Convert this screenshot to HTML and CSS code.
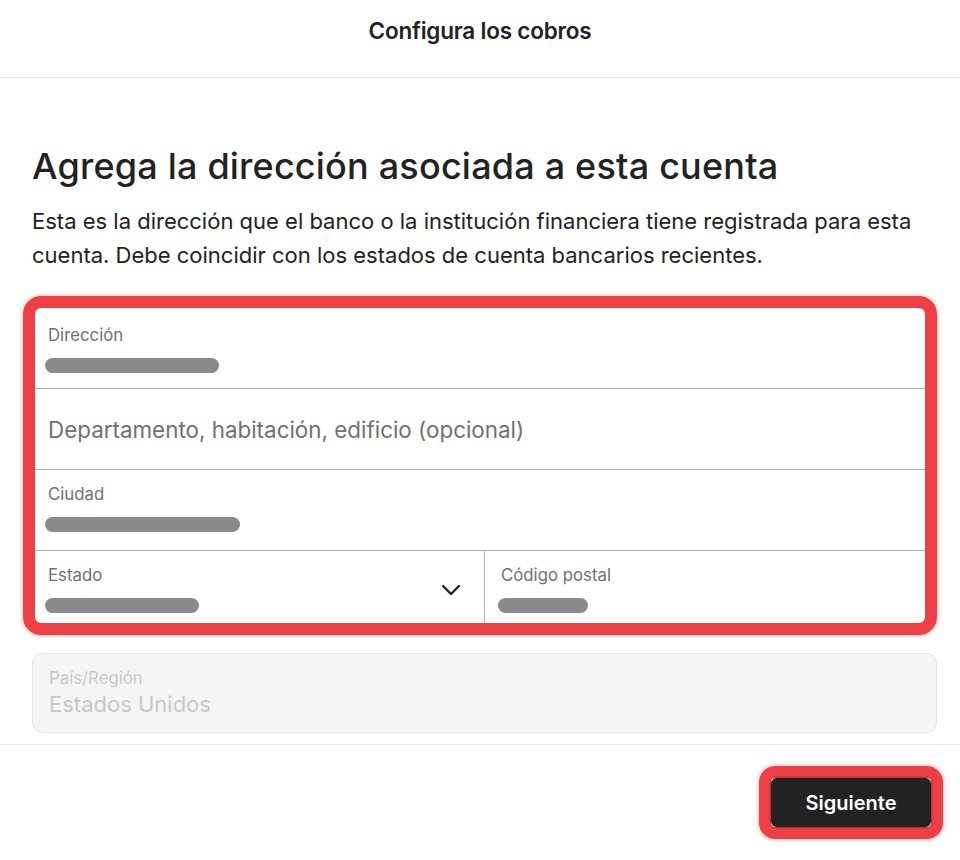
FILE: index.html
```html
<!DOCTYPE html>
<html lang="es">
<head>
	<meta charset="UTF-8">
	<title>Configura los cobros</title>
	<link rel="stylesheet" href="styles.css">
</head>
<body>
	<div class="header">Configura los cobros</div>
	<div class="main">
		<h1 class="title">Agrega la dirección asociada a esta cuenta</h1>
		<p class="intro">Esta es la dirección que el banco o la institución financiera tiene registrada para esta cuenta. Debe coincidir con los estados de cuenta bancarios recientes.</p>
		<div class="highlight">
			<div class="row">
				<div class="field">
					<span class="label">Dirección</span>
					<span class="blur" style="width: 174px;"></span>
				</div>
			</div>
			<div class="row">
				<div class="field empty">
					<span class="placeholder">Departamento, habitación, edificio (opcional)</span>
				</div>
			</div>
			<div class="row">
				<div class="field">
					<span class="label">Ciudad</span>
					<span class="blur" style="width: 195px;"></span>
				</div>
			</div>
			<div class="row split">
				<div class="field select">
					<span class="label">Estado</span>
					<span class="blur" style="width: 154px;"></span>
					<svg class="chevron" width="20" height="12" viewBox="0 0 20 12"><path d="M2 2l8 8 8-8" fill="none" stroke="#222" stroke-width="2.4" stroke-linecap="round" stroke-linejoin="round"/></svg>
				</div>
				<div class="field">
					<span class="label">Código postal</span>
					<span class="blur" style="width: 90px;"></span>
				</div>
			</div>
		</div>
		<div class="country">
			<span class="label">País/Región</span>
			<span class="value">Estados Unidos</span>
		</div>
	</div>
	<div class="footer">
		<div class="btn-mark">
			<button class="btn">Siguiente</button>
		</div>
	</div>
</body>
</html>
```
FILE: styles.css
```css
*{
	margin: 0;
	padding: 0;
	box-sizing: border-box;
}
body{
	width: 960px;
	height: 860px;
	background: #fff;
	color: #222;
	font-family: Inter, "Noto Sans", sans-serif;
	overflow: hidden;
}
.header{
	height: 78px;
	border-bottom: 1px solid #ebebeb;
	text-align: center;
	font-size: 22.5px;
	line-height: 28px;
	font-weight: 600;
	letter-spacing: -0.2px;
	padding-top: 17px;
}
.main{
	padding: 66px 23px 11px 32px;
	border-bottom: 1px solid #ebebeb;
}
.title{
	font-size: 36px;
	font-weight: 500;
	line-height: 44px;
	letter-spacing: 0.2px;
}
.intro{
	font-size: 22px;
	line-height: 34px;
	margin-top: 16px;
	max-width: 895px;
	color: #222;
}
.highlight{
	margin: 24px 0 0 -9px;
	border: 12px solid #ee4044;
	border-radius: 18px;
	box-shadow: 0 0 5px rgba(238, 64, 68, 0.45);
	overflow: hidden;
}
.row{
	display: flex;
	height: 81px;
	border-top: 1px solid #b0b0b0;
}
.row:first-child{
	height: 80px;
	border-top: none;
}
.row:first-child .field{
	padding-top: 17px;
}
.row.split{
	height: 73px;
}
.field{
	flex: 1;
	position: relative;
	display: flex;
	flex-direction: column;
	padding: 14px 13px 0 13px;
}
.field.select{
	flex: 0 0 449px;
}
.split .field + .field{
	border-left: 1px solid #b0b0b0;
	padding-left: 16px;
}
.field.empty{
	justify-content: center;
	padding-top: 0;
}
.label{
	font-size: 16.8px;
	line-height: 20px;
	color: #717171;
}
.placeholder{
	font-size: 22.4px;
	color: #717171;
}
.blur{
	display: block;
	height: 15px;
	margin: 13px 0 0 -3px;
	border-radius: 8px;
	background: #8a8a8a;
}
.chevron{
	position: absolute;
	right: 23px;
	top: 33px;
}
.country{
	margin-top: 18px;
	height: 80px;
	border: 1px solid #e6e6e6;
	border-radius: 10px;
	background: #f5f5f5;
	display: flex;
	flex-direction: column;
	padding: 14px 16px 0 16px;
}
.country .label{
	color: #c8c8c8;
}
.country .value{
	font-size: 22px;
	line-height: 26px;
	color: #c8c8c8;
	margin-top: 3px;
}
.footer{
	display: flex;
	justify-content: flex-end;
	padding: 21px 17px 0 0;
}
.btn-mark{
	border: 12px solid #ee4044;
	border-radius: 16px;
	box-shadow: 0 0 5px rgba(238, 64, 68, 0.45);
}
.btn{
	display: block;
	width: 160px;
	height: 49px;
	border: none;
	border-radius: 6px;
	background: #222;
	color: #fff;
	font-family: Inter, "Noto Sans", sans-serif;
	font-size: 20px;
	font-weight: 600;
	box-shadow: 0 0 3px rgba(0, 0, 0, 0.6);
}
```
